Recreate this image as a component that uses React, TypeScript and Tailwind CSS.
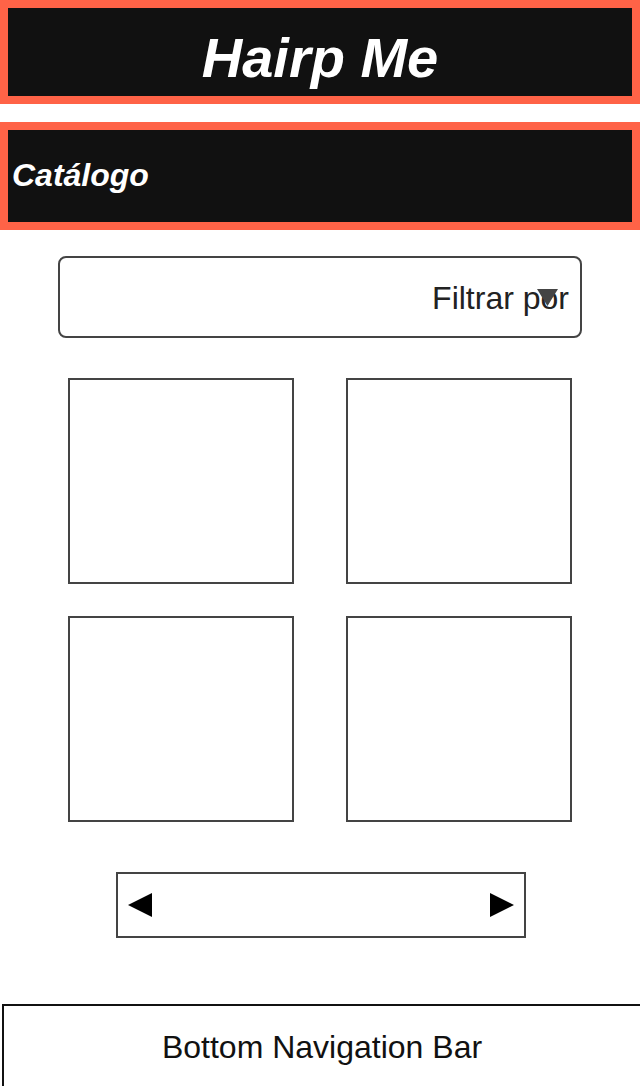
export default function App() {
  const items = [1, 2, 3, 4]

  return (
    <div className="min-h-screen w-full overflow-hidden bg-white font-['Liberation_Sans',Arial,sans-serif] text-[#111]">
      {/* app header */}
      <header className="h-[104px] border-8 border-[#ff6347] bg-[#111] pt-[18px] text-center">
        <h1 className="text-[56px] leading-[64px] font-bold italic text-white">Hairp Me</h1>
      </header>

      {/* section title */}
      <div className="mt-[18px] flex h-[108px] items-center border-8 border-[#ff6347] bg-[#111] pl-1 pb-[2px]">
        <h2 className="text-[32px] leading-[37px] font-bold italic text-white">Catálogo</h2>
      </div>

      {/* filter select */}
      <div className="relative mx-auto mt-[26px] flex h-[82px] w-[524px] items-center justify-end rounded-lg border-2 border-[#444] pr-[11px] pt-[3px]">
        <span className="text-[32px] leading-[37px] text-[#222]">Filtrar por</span>
        <svg className="absolute right-[22px] top-[31px]" width="21" height="17" viewBox="0 0 21 17">
          <polygon points="0,0 21,0 10.5,17" fill="#444" />
        </svg>
      </div>

      {/* product grid */}
      <div className="mx-auto mt-[40px] grid w-[504px] grid-cols-[226px_226px] gap-x-[52px] gap-y-[32px]">
        {items.map((i) => (
          <div key={i} className="h-[206px] border-2 border-[#444] bg-white" />
        ))}
      </div>

      {/* pagination */}
      <div className="ml-[116px] mt-[50px] flex h-[66px] w-[410px] items-center justify-between border-2 border-[#444] px-[10px]">
        <svg width="24" height="24" viewBox="0 0 24 24">
          <polygon points="24,0 24,24 0,12" fill="#000" />
        </svg>
        <svg width="24" height="24" viewBox="0 0 24 24">
          <polygon points="0,0 0,24 24,12" fill="#000" />
        </svg>
      </div>

      {/* bottom navigation */}
      <nav className="ml-[2px] mt-[66px] w-[640px] border-2 border-[#111] pt-[23px] pb-[30px] text-center">
        <span className="text-[32px] leading-[37px] text-[#111]">Bottom Navigation Bar</span>
      </nav>
    </div>
  )
}
